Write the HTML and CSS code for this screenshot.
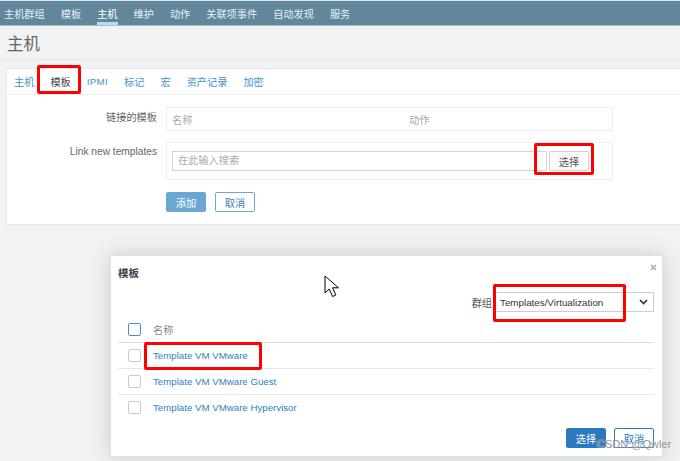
FILE: index.html
```html
<!DOCTYPE html>
<html lang="zh-CN">
<head>
<meta charset="utf-8">
<title>主机</title>
<link rel="stylesheet" href="styles.css">
</head>
<body>
<header class="topnav">
  <nav class="menu">
    <a class="menu-item">主机群组</a>
    <a class="menu-item">模板</a>
    <a class="menu-item active">主机</a>
    <a class="menu-item">维护</a>
    <a class="menu-item">动作</a>
    <a class="menu-item">关联项事件</a>
    <a class="menu-item">自动发现</a>
    <a class="menu-item">服务</a>
  </nav>
</header>

<div class="page-title"><h1>主机</h1></div>

<main class="panel">
  <ul class="tabs">
    <li class="tab">主机</li>
    <li class="tab active">模板</li>
    <li class="tab latin">IPMI</li>
    <li class="tab">标记</li>
    <li class="tab">宏</li>
    <li class="tab">资产记录</li>
    <li class="tab">加密</li>
  </ul>
  <form class="form">
    <div class="form-row">
      <label class="form-label">链接的模板</label>
      <div class="linked-table">
        <span class="col-name">名称</span><span class="col-action">动作</span>
      </div>
    </div>
    <div class="form-row">
      <label class="form-label latin">Link new templates</label>
      <div class="multiselect">
        <div class="ms-input">在此输入搜索</div>
        <button type="button" class="btn-grey">选择</button>
      </div>
    </div>
    <div class="form-row">
      <div class="form-label"></div>
      <div class="form-actions">
        <button type="button" class="btn-soft">添加</button>
        <button type="button" class="btn-alt">取消</button>
      </div>
    </div>
  </form>
  <span class="mark mark-tab"></span>
  <span class="mark mark-select-btn"></span>
</main>

<section class="modal">
  <div class="modal-head">模板</div>
  <svg class="modal-close" width="7" height="7" viewBox="0 0 7 7"><path d="M1 1L6 6M6 1L1 6" stroke="#a3aab0" stroke-width="1.5"/></svg>
  <div class="filter-row">
    <span class="filter-label">群组</span>
    <div class="select">
      <span>Templates/Virtualization</span>
      <svg width="9" height="6" viewBox="0 0 9 6"><path d="M1 1L4.5 4.5L8 1" fill="none" stroke="#333" stroke-width="1.6"/></svg>
    </div>
  </div>
  <div class="list">
    <div class="list-row list-head">
      <span class="cb cb-blue"></span><span class="head-name">名称</span>
    </div>
    <div class="list-row"><span class="cb"></span><a class="link">Template VM VMware</a></div>
    <div class="list-row"><span class="cb"></span><a class="link">Template VM VMware Guest</a></div>
    <div class="list-row last"><span class="cb"></span><a class="link">Template VM VMware Hypervisor</a></div>
  </div>
  <div class="modal-foot">
    <button type="button" class="btn-primary">选择</button>
    <button type="button" class="btn-outline">取消</button>
  </div>
</section>

<span class="mark mark-group"></span>
<span class="mark mark-row"></span>

<svg class="cursor" width="18" height="23" viewBox="0 0 18 23"><path d="M1 1V18L5.2 14L8.6 21.5L11.8 20L8.5 12.8L14.5 12.8Z" fill="#fff" stroke="#000" stroke-width="1" stroke-linejoin="miter"/></svg>

<span class="watermark">CSDN @Qwler</span>
</body>
</html>
```
FILE: styles.css
```css
* { box-sizing: border-box; }
html, body { margin: 0; padding: 0; }
body {
  width: 680px;
  height: 461px;
  overflow: hidden;
  position: relative;
  background: #f1f2f4;
  font-family: "Liberation Sans", "Noto Sans CJK SC", sans-serif;
  font-size: 10.2px;
  color: #444;
}

/* top navigation */
.topnav {
  border-top: 1px solid #e2e7ea;
  height: 26px;
  background: #62879c;
  border-bottom: 1px solid #a9bfcc;
}
.menu {
  display: flex;
  gap: 16px;
  padding-left: 4px;
  height: 24px;
}
.menu-item {
  display: flex;
  align-items: center;
  height: 24px;
  color: #e9eef2;
  font-size: 10.2px;
}
.menu-item.active {
  color: #fff;
  box-shadow: inset 0 -3px 0 #b3dcf7;
}

/* page title */
.page-title {
  height: 34px;
  border-bottom: 1px solid #e3e5e8;
  padding: 7px 0 0 7px;
}
.page-title h1 {
  margin: 0;
  font-size: 16.5px;
  line-height: 22px;
  font-weight: normal;
  color: #666;
}

/* panel */
.panel {
  position: relative;
  margin: 8px 0 0 6px;
  height: 157px;
  background: #fff;
  border: 1px solid #e6e8eb;
  border-right: none;
}
.tabs {
  display: flex;
  gap: 16px;
  margin: 0;
  padding: 0 0 0 7px;
  list-style: none;
  height: 26px;
  border-bottom: 1px solid #eceef0;
}
.tab {
  display: flex;
  align-items: center;
  height: 25px;
  color: #4392c9;
  font-size: 10.2px;
}
.tab.latin { font-size: 9.8px; letter-spacing: 0.3px; }
.tab.active { color: #444; }

.form { padding-top: 12px; }
.form-row { display: flex; gap: 9px; }
.form-row + .form-row { margin-top: 11px; }
.form-row:last-child { margin-top: 12px; }
.form-label {
  width: 150px;
  text-align: right;
  color: #666;
  line-height: 14px;
  padding-top: 4px;
}
.form-label.latin { padding-top: 3px; }

.linked-table {
  width: 447px;
  height: 24px;
  border: 1px solid #eceef0;
  display: flex;
  align-items: center;
  padding-left: 5px;
  color: #aaa;
}
.col-name { width: 237px; }

.multiselect {
  width: 447px;
  height: 38px;
  border: 1px solid #eceef0;
  padding: 8px 5px;
  display: flex;
  gap: 2px;
}
.ms-input {
  width: 375px;
  height: 20px;
  border: 1px solid #cdd3d8;
  padding-left: 5px;
  line-height: 18px;
  color: #aaa;
}
button {
  font-family: inherit;
  font-size: 10.2px;
  height: 20px;
  width: 40px;
  padding: 0;
  margin: 0;
  cursor: default;
}
.btn-grey {
  background: #fbfbfb;
  border: 1px solid #cdd2d6;
  border-radius: 2px;
  color: #555;
}
.form-actions { display: flex; gap: 9px; }
.btn-soft {
  background: #6aa7d3;
  border: 1px solid #6aa7d3;
  border-radius: 2px;
  color: #fff;
}
.btn-alt {
  background: #fff;
  border: 1px solid #6aa7d3;
  border-radius: 2px;
  color: #3c7db5;
}

/* modal */
.modal {
  position: absolute;
  left: 110px;
  top: 255px;
  width: 553px;
  height: 202px;
  background: #fff;
  border: 1px solid #dfe2e5;
  box-shadow: 0 0 18px rgba(60, 70, 80, 0.22);
  padding: 0 8px 8px 7px;
  display: flex;
  flex-direction: column;
}
.modal-head {
  height: 36px;
  padding: 10px 0 0 0;
  line-height: 14px;
  font-weight: bold;
  font-size: 10.5px;
  color: #3d4449;
}
.modal-close { position: absolute; top: 8px; right: 5px; }
.filter-row {
  display: flex;
  justify-content: flex-end;
  align-items: center;
  height: 20px;
  gap: 1px;
}
.filter-label { color: #555; }
.select {
  width: 161px;
  height: 20px;
  border: 1px solid #c9ced3;
  display: flex;
  align-items: center;
  justify-content: space-between;
  padding: 0 5px 0 6px;
  font-size: 9.8px;
  color: #333;
}
.list { margin-top: 5px; }
.list-row {
  display: flex;
  align-items: center;
  height: 26px;
  border-bottom: 1px solid #e6e9ec;
  padding-left: 10px;
  gap: 12px;
}
.list-row.last { border-bottom-color: transparent; }
.list-head { border-bottom-color: #dde1e5; }
.head-name { color: #888; }
.cb {
  width: 13px;
  height: 13px;
  border: 1px solid #c6ccd1;
  border-radius: 2px;
  background: #fff;
}
.cb-blue { border-color: #4a91ca; }
.link { color: #2f7fc0; font-size: 9.7px; }

.modal-foot {
  margin-top: auto;
  display: flex;
  justify-content: flex-end;
  gap: 8px;
}
.btn-primary {
  background: #2a79bf;
  border: 1px solid #2a79bf;
  border-radius: 2px;
  color: #fff;
}
.btn-outline {
  background: #fff;
  border: 1px solid #2a79bf;
  border-radius: 2px;
  color: #2a79bf;
}

/* red annotation boxes */
.mark {
  position: absolute;
  border: 3px solid #f00;
  border-radius: 2px;
  pointer-events: none;
}
.mark-tab { left: 30px; top: -4px; width: 44px; height: 29px; }
.mark-select-btn { left: 527px; top: 74px; width: 60px; height: 32px; }
.mark-group { left: 493px; top: 284px; width: 133px; height: 38px; }
.mark-row { left: 144px; top: 342px; width: 118px; height: 28px; }

.cursor { position: absolute; left: 324px; top: 275px; }

.watermark {
  position: absolute;
  left: 597px;
  top: 438px;
  font-size: 11px;
  color: rgba(120, 124, 128, 0.85);
  text-shadow: 0 0 2px #fff;
}
```
